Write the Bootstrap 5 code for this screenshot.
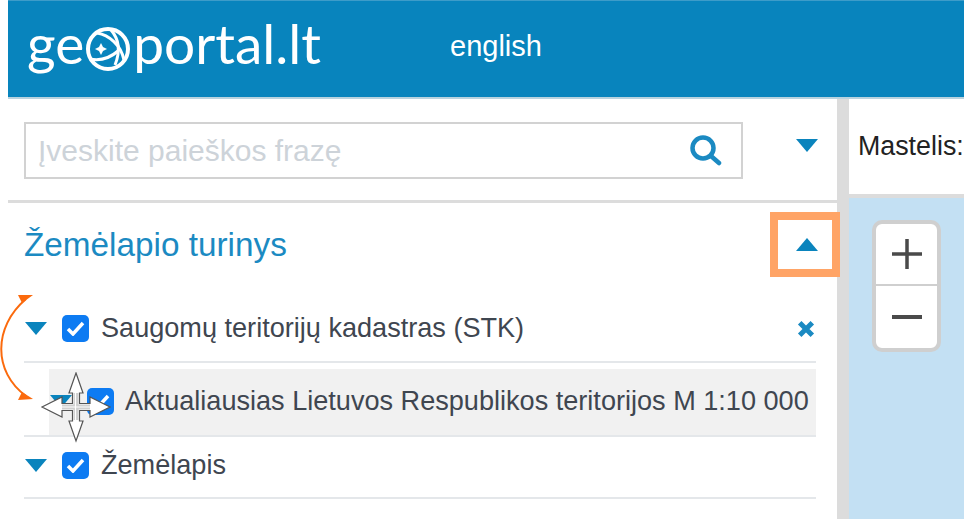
<!DOCTYPE html>
<html lang="en">
<head>
    <meta charset="UTF-8">
    <meta name="viewport" content="width=device-width, initial-scale=1.0">
    <title>Geoportal</title>
    <link href="https://cdn.jsdelivr.net/npm/bootstrap@5.3.1/dist/css/bootstrap.min.css" rel="stylesheet">
    <style>
        html, body { height: 100%; overflow: hidden; }
        body {
            background: #fff;
            color: #333;
            font-family: "Liberation Sans", Arial, sans-serif;
            padding-left: 8px;
            position: relative;
        }
        .geo-header {
            height: 99px;
            background: #0884bd;
            border-top: 1px solid #3d9cc9;
            border-bottom: 2px solid #b9d3df;
            color: #fff;
            padding-left: 19px;
        }
        .geo-logo {
            font-family: "Lato", sans-serif;
            font-size: 55px;
            font-weight: 400;
            line-height: 1;
            width: 423px;
            margin-top: -10px;
            white-space: nowrap;
        }
        .geo-logo svg { margin: 0 2px 0 1px; vertical-align: -8px; }
        .geo-lang { font-size: 29px; margin-top: -4px; }
        .geo-main { height: 420px; }
        .geo-side { width: 829px; }
        .geo-split { width: 12px; background: #dcdcdc; }
        .geo-search {
            height: 104px;
            border-bottom: 3px solid #dcdcdc;
            padding: 23px 19px 0 16px;
        }
        .geo-input {
            width: 719px;
            height: 57px;
            border: 2px solid #d2d2d2;
            padding: 0 19px 0 12px;
            font-size: 30px;
            color: #cdd3d9;
        }
        .geo-searchdown { margin-top: 17px; }
        .geo-title {
            font-size: 33.300px;
            color: #1b8ac2;
            padding: 0 0 5px 16px;
            height: 88px;
        }
        .geo-up { margin-right: 19px; }
        .geo-row {
            margin-left: 16px;
            width: 792px;
            border-bottom: 2px solid #e4e7ea;
            font-size: 27.100px;
            color: #3f4650;
            white-space: nowrap;
        }
        .geo-row-a { height: 72px; padding-top: 5px; }
        .geo-row-b { height: 68px; margin-top: 6px; padding-left: 25px; }
        .geo-row-b .geo-inner { background: #f1f1f1; height: 100%; width: 100%; padding-bottom: 2px; }
        .geo-row-b .geo-label { margin-left: 11px; }
        .geo-row-c { height: 62px; padding-bottom: 4px; }
        .geo-check {
            width: 27px;
            height: 27px;
            background: #0d7bf2;
            border-radius: 5px;
            flex: none;
            margin-left: 15px;
        }
        .geo-down { flex: none; display: block; margin-left: 1px; }
        .geo-close { margin-right: 1px; }
        .geo-scale { height: 99px; font-size: 26.800px; color: #222; padding-left: 9px; border-bottom: 4px solid #dcdcdc; white-space: nowrap; overflow: hidden; }
        .geo-map { background: #c3e0f3; flex: 1 1 auto; padding: 22px 0 0 23px; }
        .geo-zoom {
            width: 69px;
            height: 132px;
            background: #fff;
            border: 4px solid #cfcfcf;
            border-radius: 10px;
        }
        .geo-zoom div { height: 60px; }
        .geo-zoom div + div { height: 64px; border-top: 2px solid #cfcfcf; }
        .geo-mark {
            position: absolute;
            left: 770px;
            top: 212px;
            width: 70px;
            height: 65px;
            border: 8px solid #ffa466;
        }
        .geo-arrow { position: absolute; left: 0; top: 292px; }
        .geo-move { position: absolute; left: 40px; top: 372px; }
    </style>
</head>
<body>

<!-- Header -->
<header class="geo-header d-flex align-items-center">
    <div class="geo-logo">ge<svg width="46" height="46" viewBox="0 0 46 46" fill="none" stroke="#fff" stroke-width="4"><circle cx="23" cy="23" r="20"/><path d="M12 7c12 2 24 12 27 27" stroke-width="3"/><path d="M26 4c7 8 10 20 4 35" stroke-width="3"/><path d="M5 33c10 2 20-1 28-8" stroke-width="3"/><path d="M16 17l2 4 4 2-4 2-2 4-2-4-4-2 4-2z" fill="#fff" stroke="none"/></svg>portal.lt</div>
    <div class="geo-lang">english</div>
</header>

<div class="geo-main d-flex">
    <!-- Sidebar -->
    <div class="geo-side">
        <div class="geo-search d-flex">
            <div class="geo-input d-flex align-items-center justify-content-between">
                <span>Įveskite paieškos frazę</span>
                <svg width="34" height="34" viewBox="0 0 34 34" fill="none" stroke="#1b8ac2" stroke-width="4.500" stroke-linecap="round"><circle cx="15" cy="14" r="10.500"/><path d="M23 22l8 7"/></svg>
            </div>
            <svg class="geo-searchdown ms-auto" width="22" height="13" viewBox="0 0 22 13"><path d="M0 0h22L11 13z" fill="#0a84bd"/></svg>
        </div>
        <div class="geo-title d-flex align-items-center justify-content-between">
            <span>Žemėlapio turinys</span>
            <svg class="geo-up" width="22" height="13" viewBox="0 0 22 13"><path d="M0 13h22L11 0z" fill="#0a84bd"/></svg>
        </div>

        <div class="geo-row geo-row-a d-flex align-items-center">
            <svg class="geo-down" width="22" height="13" viewBox="0 0 22 13"><path d="M0 0h22L11 13z" fill="#0a84bd"/></svg>
            <div class="geo-check d-flex align-items-center justify-content-center"><svg width="19" height="15" viewBox="0 0 19 15" fill="none" stroke="#fff" stroke-width="3.500"><path d="M2 8l5 5L17 2"/></svg></div>
            <span class="ms-2 ps-1">Saugomų teritorijų kadastras (STK)</span>
            <svg class="geo-close ms-auto" width="18" height="18" viewBox="0 0 20 20" fill="none" stroke="#1b8ac2" stroke-width="5.500"><path d="M3 3l14 14M17 3L3 17"/></svg>
        </div>
        <div class="geo-row geo-row-b">
            <div class="geo-inner d-flex align-items-center">
                <svg class="geo-down" width="22" height="13" viewBox="0 0 22 13"><path d="M0 0h22L11 13z" fill="#0a84bd"/></svg>
                <div class="geo-check d-flex align-items-center justify-content-center"><svg width="19" height="15" viewBox="0 0 19 15" fill="none" stroke="#fff" stroke-width="3.500"><path d="M2 8l5 5L17 2"/></svg></div>
                <span class="geo-label">Aktualiausias Lietuvos Respublikos teritorijos M 1:10 000</span>
            </div>
        </div>
        <div class="geo-row geo-row-c d-flex align-items-center">
            <svg class="geo-down" width="22" height="13" viewBox="0 0 22 13"><path d="M0 0h22L11 13z" fill="#0a84bd"/></svg>
            <div class="geo-check d-flex align-items-center justify-content-center"><svg width="19" height="15" viewBox="0 0 19 15" fill="none" stroke="#fff" stroke-width="3.500"><path d="M2 8l5 5L17 2"/></svg></div>
            <span class="ms-2 ps-1">Žemėlapis</span>
        </div>
    </div>

    <div class="geo-split"></div>

    <!-- Map -->
    <div class="flex-grow-1 d-flex flex-column">
        <div class="geo-scale d-flex align-items-center">Mastelis:</div>
        <div class="geo-map">
            <div class="geo-zoom">
                <div class="d-flex align-items-center justify-content-center"><svg width="30" height="30" viewBox="0 0 30 30" stroke="#4a4a4a" stroke-width="3.500"><path d="M0 15h30M15 0v30"/></svg></div>
                <div class="d-flex align-items-center justify-content-center"><svg width="30" height="4" viewBox="0 0 30 4" stroke="#4a4a4a" stroke-width="4"><path d="M0 2h30"/></svg></div>
            </div>
        </div>
    </div>
</div>

<!-- Overlays -->
<div class="geo-mark"></div>
<svg class="geo-arrow" width="36" height="116" viewBox="0 0 36 116" fill="none">
    <path d="M26 7C-7 35-7 80 26 104" stroke="#fb6a0d" stroke-width="2"/>
    <path d="M18 3h15L22 11z" fill="#fb6a0d"/>
    <path d="M18 108l15-1-11-7z" fill="#fb6a0d"/>
</svg>
<svg class="geo-move" width="72" height="72" viewBox="0 0 72 72">
    <path d="M36 1L43 21H39.500V31.500H50V25L70 35 50 45V38.500H39.500V49H43L36 69 29 49H32.500V38.500H22V45L2 35 22 25V31.500H32.500V21H29Z" fill="#fff" stroke="#555" stroke-width="1.200"/>
    <path d="M33.500 21h5v27h-5zM22 32.500h28v5H22z" fill="#cfcfcf"/>
    <path d="M35.500 21v27M22 35h28" stroke="#fff" stroke-width="1.200"/>
</svg>

<script src="https://cdn.jsdelivr.net/npm/bootstrap@5.3.1/dist/js/bootstrap.bundle.min.js"></script>
</body>
</html>
